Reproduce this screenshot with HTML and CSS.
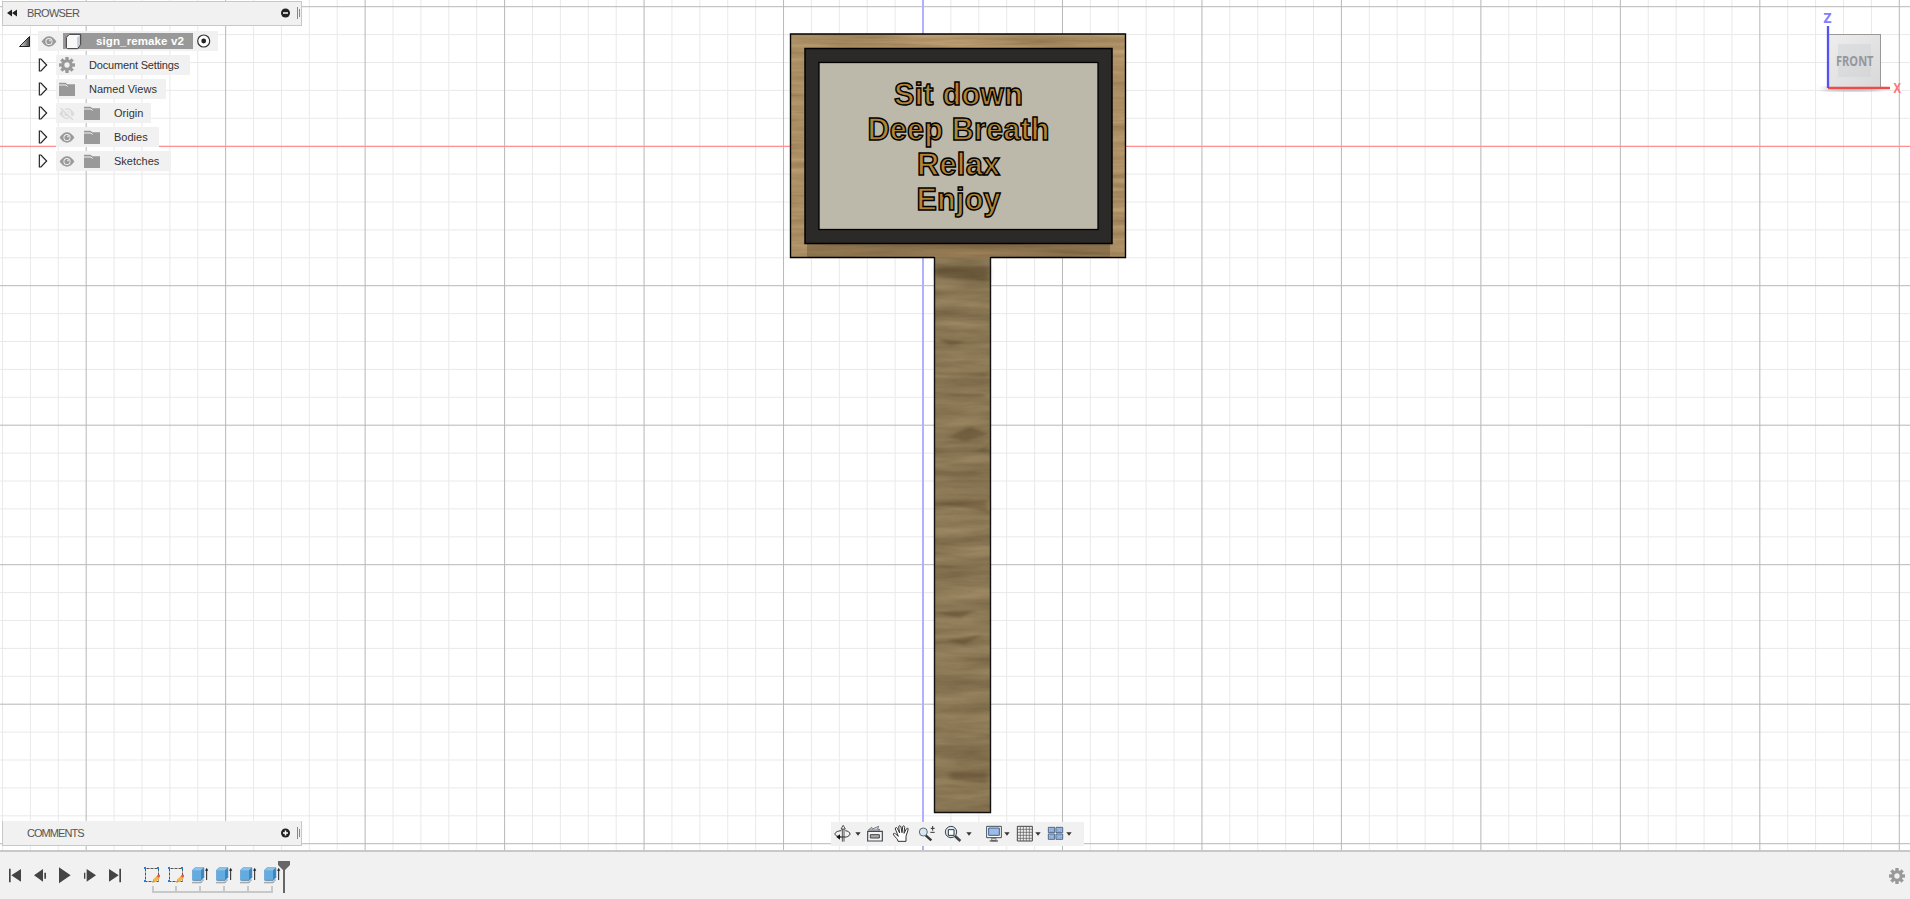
FILE: index.html
```html
<!DOCTYPE html>
<html lang="en">
<head>
<meta charset="utf-8">
<title>sign_remake v2</title>
<link rel="stylesheet" href="styles.css">
</head>
<body>
<svg class="defs" width="0" height="0">
  <defs>
    <symbol id="eye" viewBox="0 0 48 34"><path d="M1 17Q24-15 47 17Q24 49 1 17Z" fill="#999"/><circle cx="24" cy="17" r="11" fill="#f1f1f1"/><circle cx="24" cy="17" r="8" fill="#999"/><circle cx="27" cy="14" r="3" fill="#ddd"/></symbol>
    <symbol id="folder" viewBox="0 0 48 42"><path d="M0 2H20L25 7H48V42H0Z" fill="#999"/><path d="M0 9H21L26 14" fill="none" stroke="#f1f1f1" stroke-width="3"/></symbol>
    <symbol id="arrow" viewBox="0 0 30 42"><path d="M4 3H9L26 21L9 39H4Z" fill="#f8f8f8" stroke="#222" stroke-width="3.500"/></symbol>
    <symbol id="gear" viewBox="0 0 48 48"><g fill="#999"><path id="tooth" d="M19 0H29V48H19Z"/><use href="#tooth" transform="rotate(45 24 24)"/><use href="#tooth" transform="rotate(90 24 24)"/><use href="#tooth" transform="rotate(135 24 24)"/><circle cx="24" cy="24" r="17.500"/></g><circle cx="24" cy="24" r="8" fill="#f1f1f1"/></symbol>
    <symbol id="drop" viewBox="0 0 18 12"><path d="M1 1H17L9 11Z" fill="#333"/></symbol>
    <symbol id="sketch" viewBox="0 0 54 54"><path d="M4.500 4.500H43.500V43.500H4.500Z" fill="none" stroke="#555" stroke-width="3" stroke-dasharray="9 3" stroke-dashoffset="-3"/><g fill="#1685e4"><path d="M0 0h6v6h-6zM39 0h6v6h-6zM0 39h6v6h-6z"/></g><path d="M25 47L28 37L39 26L47 33L36 44Z" fill="#f2b64b"/><path d="M38 27L42 23H48V29L44 33Z" fill="#ff5050"/><path d="M25 47L28 39L33 44Z" fill="#b59c7a"/></symbol>
    <symbol id="extrude" viewBox="2 0 54 54"><path d="M2 44L12 36H38V39L29 49H2Z" fill="#999"/><path d="M2 41V44H28L38 35" fill="none" stroke="#eee" stroke-width="3"/><path d="M3 10L11 2H38V31L29 40H3Z" fill="#64abe0"/><path d="M3 10L11 2H38L29 10Z" fill="#8ec7ec"/><path d="M29 10L38 2V31L29 40Z" fill="#3d86bf"/><path d="M3 10L11 2H38V31L29 40H3Z" fill="none" stroke="#4a93cc" stroke-width="1.500"/><path d="M46 39V5" stroke="#222" stroke-width="3"/><path d="M41 11L46 3L51 11Z" fill="#222"/></symbol>
  </defs>
</svg>
<main class="app">
  <section class="viewport">
    <svg class="scene" width="1910" height="850" viewBox="0 0 1910 850">
      <defs>
        <pattern id="minor" x="922.500" y="145.700" width="27.894" height="27.900" patternUnits="userSpaceOnUse"><path d="M0 .5H28M.5 0V28" stroke="#000" stroke-opacity=".085"/></pattern>
        <pattern id="major" x="922.500" y="145.700" width="139.470" height="139.500" patternUnits="userSpaceOnUse"><path d="M0 .5H140M.5 0V140" stroke="#000" stroke-opacity=".21"/></pattern>
        <filter id="grain" x="0" y="0" width="100%" height="100%" color-interpolation-filters="sRGB">
          <feTurbulence type="fractalNoise" baseFrequency=".01 .16" numOctaves="5" seed="12" result="noise"/>
          <feColorMatrix in="noise" values=".22 0 0 0 .56  .21 0 0 0 .45  .18 0 0 0 .30  0 0 0 0 1"/>
        </filter>
        <filter id="grain-post" x="0" y="0" width="100%" height="100%" color-interpolation-filters="sRGB">
          <feTurbulence type="fractalNoise" baseFrequency=".012 .09" numOctaves="5" seed="5" result="noise"/>
          <feColorMatrix in="noise" values=".22 0 0 0 .43  .2 0 0 0 .365  .17 0 0 0 .245  0 0 0 0 1"/>
        </filter>
        <linearGradient id="shade" x1="0" x2="0" y1="0" y2="1"><stop offset="0" stop-color="#32230d" stop-opacity=".3"/><stop offset="1" stop-color="#32230d" stop-opacity=".22"/></linearGradient>
        <linearGradient id="cube" x1="0" y1="0" x2="1" y2="1"><stop offset="0" stop-color="#eee"/><stop offset="1" stop-color="#d8d8d8"/></linearGradient>
        <filter id="soft"><feGaussianBlur stdDeviation="3"/></filter>
        <filter id="smudge"><feGaussianBlur stdDeviation="2.500 1.200"/></filter>
      </defs>
      <rect width="1910" height="850" fill="#fff"/>
      <rect width="1910" height="850" fill="url(#minor)"/>
      <rect width="1910" height="850" fill="url(#major)"/>
      <path d="M0 146.500H1910" stroke="#ff9090"/>
      <path d="M923 0V850" stroke="#b0b0ff" stroke-width="2"/>

      <rect x="934" y="255" width="57" height="558" filter="url(#grain-post)"/>
      <g fill="#45321b" filter="url(#smudge)" opacity=".3">
        <path d="M936 266H989V282L936 277ZM938 338L965 342L950 346ZM936 373H988V376L936 374ZM936 394H985V397L936 395ZM948 437L970 427L988 434L965 441ZM974 451L988 446V453ZM936 504L988 500V512L965 508ZM937 613L976 610L960 618ZM948 641L984 634L964 645ZM950 772H988V784L950 780Z"/>
      </g>
      <path d="M934.500 257V812.500H990.500V257" fill="none" stroke="#111" stroke-width="1.400"/>
      <rect x="791" y="34" width="335" height="223" filter="url(#grain)"/>
      <rect x="807" y="243" width="303" height="14" fill="url(#shade)"/>
      <path d="M934.500 257.500H790.500V34H1125.500V257.500H990.500" fill="none" stroke="#000" stroke-width="1.400"/>
      <rect x="805" y="48.500" width="307" height="195" fill="#2b2a28" stroke="#000" stroke-width="1.500"/>
      <rect x="819" y="62.500" width="279" height="167" fill="#bdb9aa" stroke="#000" stroke-width="1.300"/>
      <g class="sign-text">
        <text x="894" y="105.300" textLength="129">Sit down</text>
        <text x="867.500" y="140" textLength="182">Deep Breath</text>
        <text x="917" y="174.800" textLength="83">Relax</text>
        <text x="916.500" y="209.700" textLength="84">Enjoy</text>
      </g>

      <ellipse cx="1852" cy="89" rx="30" ry="2.500" fill="#777" opacity=".6" filter="url(#soft)"/>
      <rect x="1828.500" y="34.500" width="52" height="53" fill="url(#cube)" stroke="#999"/>
      <rect x="1838" y="44" width="33" height="33" fill="#cdd0d3" opacity=".45"/>
      <text class="cube-label" x="1836" y="66" textLength="37.500" lengthAdjust="spacingAndGlyphs">FRONT</text>
      <path d="M1828 88H1890" stroke="#f04a4a" stroke-width="2.300"/>
      <path d="M1828 26V88" stroke="#5552f0" stroke-width="2.300"/>
      <text class="axis" x="1823.500" y="23" fill="#8080ff" textLength="8" lengthAdjust="spacingAndGlyphs">Z</text>
      <text class="axis" x="1893.500" y="93" fill="#ff7676" textLength="7.500" lengthAdjust="spacingAndGlyphs">X</text>
    </svg>

    <aside class="browser">
      <header class="panel">
        <svg width="12" height="8" viewBox="0 0 12 8"><path d="M5 .5V7.500L0 4ZM10 .5V7.500L5 4Z" fill="#222"/></svg>
        <span class="panel-title">BROWSER</span>
        <svg width="20" height="12" viewBox="0 0 20 12"><circle cx="4.500" cy="6" r="4.500" fill="#222"/><path d="M2 6H7" stroke="#fff" stroke-width="1.500"/><path d="M16.500 0V12M18.500 2V10" stroke="#888"/></svg>
      </header>
      <div class="tree">
        <div class="row root">
          <svg class="tri" width="13" height="13" viewBox="0 0 13 13"><defs><linearGradient id="tg"><stop stop-color="#eee"/><stop offset="1" stop-color="#444"/></linearGradient></defs><path d="M1.500 11.500H11.500V1.500Z" fill="url(#tg)" stroke="#222"/></svg>
          <div class="item">
            <svg width="16" height="11"><use href="#eye"/></svg>
            <div class="selected"><svg width="17" height="17" viewBox="0 0 51 51"><path d="M4 13L13 4H47V34L38 47H8L4 43Z" fill="#f8f8f8" stroke="#333" stroke-width="3"/><path d="M36 14L45 6V34L37 45Z" fill="#c8ccd5"/></svg><b>sign_remake v2</b></div>
            <svg width="14" height="14" viewBox="0 0 14 14"><circle cx="6.700" cy="7" r="6" fill="#fff" stroke="#333" stroke-width="1.200"/><circle cx="6.700" cy="7" r="2.400" fill="#222"/></svg>
          </div>
        </div>
        <div class="row"><svg class="arrow" width="10" height="14"><use href="#arrow"/></svg><div class="item w-settings"><svg width="16" height="16"><use href="#gear"/></svg><span class="name">Document Settings</span></div></div>
        <div class="row"><svg class="arrow" width="10" height="14"><use href="#arrow"/></svg><div class="item w-views"><svg width="16" height="14"><use href="#folder"/></svg><span class="name views">Named Views</span></div></div>
        <div class="row"><svg class="arrow" width="10" height="14"><use href="#arrow"/></svg><div class="item w-origin"><svg class="hidden-eye" width="16" height="13" viewBox="0 0 48 39"><path d="M1 20Q24-12 47 20Q24 52 1 20Z" fill="#999"/><circle cx="24" cy="20" r="12" fill="#f1f1f1"/><circle cx="24" cy="20" r="8" fill="#999"/><path d="M7 1L44 38" stroke="#f1f1f1" stroke-width="8"/><path d="M5 3L42 39" stroke="#999" stroke-width="4"/></svg><svg class="second" width="16" height="14"><use href="#folder"/></svg><span class="name">Origin</span></div></div>
        <div class="row"><svg class="arrow" width="10" height="14"><use href="#arrow"/></svg><div class="item w-bodies"><svg width="16" height="11"><use href="#eye"/></svg><svg class="second" width="16" height="14"><use href="#folder"/></svg><span class="name">Bodies</span></div></div>
        <div class="row"><svg class="arrow" width="10" height="14"><use href="#arrow"/></svg><div class="item w-sketches"><svg width="16" height="11"><use href="#eye"/></svg><svg class="second" width="16" height="14"><use href="#folder"/></svg><span class="name">Sketches</span></div></div>
      </div>
    </aside>

    <div class="panel comments">
      <span class="panel-title">COMMENTS</span>
      <svg width="20" height="12" viewBox="0 0 20 12"><circle cx="4.500" cy="6" r="4.500" fill="#222"/><path d="M2 6H7M4.500 3.500V8.500" stroke="#fff" stroke-width="1.500"/><path d="M16.500 0V12M18.500 2V10" stroke="#888"/></svg>
    </div>

    <nav class="navbar">
      <svg class="orbit" width="18" height="18" viewBox="40 46 54 54"><g fill="none" stroke="#333"><path d="M62 63C50 64 43 68 43 73S52 81 62 82" stroke-width="3"/><path d="M74 63C82 64 88 68 88 73C88 77 83 80 77 82H54" stroke-width="3"/><path d="M65 96V55M70 96V55" stroke-width="2.500"/></g><path d="M61 58L67.500 47L74 58Z" fill="#fff" stroke="#333" stroke-width="2.500"/><path d="M47 82L58 74V90Z" fill="#111"/></svg>
      <svg class="d1" width="6" height="4"><use href="#drop"/></svg>
      <svg class="look" width="18" height="18" viewBox="138 46 54 54"><path d="M143 65H187V94H143Z" fill="#f5f5f5" stroke="#444a55" stroke-width="3.500"/><path d="M151 75H178V85H151Z" fill="#aaa" stroke="#444" stroke-width="3"/><path d="M145 61L155 53L157 58L176 50L173 58L180 61Z" fill="#ddd" stroke="#444a55" stroke-width="2"/></svg>
      <svg class="hand" width="18" height="18" viewBox="217 46 54 54"><path d="M235 95C235 89 229 85 222 76C219 71 224 69 228 73L236 80L227 58C226 53 231 52 233 56L240 70L237 52C237 47 243 47 244 52L247 69L249 51C250 47 255 48 255 53L253 71L260 58C263 53 267 56 265 61L259 80V95Z" fill="#fff" stroke="#333" stroke-width="3"/></svg>
      <svg class="zoomer" width="18" height="18" viewBox="294 46 54 54"><path d="M317 77L334 92" stroke="#333" stroke-width="7"/><circle cx="310" cy="67" r="12" fill="#d3eaf0" stroke="#667" stroke-width="3"/><path d="M332 56H344M338 49V63M331 68H344" stroke="#333" stroke-width="3"/></svg>
      <svg class="window" width="18" height="18" viewBox="372 46 54 54"><path d="M405 79L421 94" stroke="#444" stroke-width="8"/><circle cx="393" cy="67" r="17" fill="#d3eaf0" stroke="#445" stroke-width="3"/><path d="M385 60H402V77H385Z" fill="#fff" stroke="#333" stroke-width="3"/></svg>
      <svg class="d2" width="6" height="4"><use href="#drop"/></svg>
      <svg class="display" width="18" height="18" viewBox="495 46 54 54"><path d="M500 50H544V84H500Z" fill="#fff" stroke="#444a55" stroke-width="3"/><path d="M506 55H538V77H506Z" fill="#9bbde6" stroke="#425d8c" stroke-width="3"/><path d="M515 86H528V93H515Z" fill="#ddd" stroke="#555" stroke-width="2"/><path d="M509 94H534" stroke="#333" stroke-width="3"/></svg>
      <svg class="d3" width="6" height="4"><use href="#drop"/></svg>
      <svg class="grid" width="18" height="18" viewBox="588 46 54 54"><path d="M592 50H637V94H592Z" fill="#eee" stroke="#444" stroke-width="3"/><path d="M601 51V94M610 51V94M619 51V94M628 51V94M593 59H636M593 68H636M593 77H636M593 86H636" stroke="#555" stroke-width="2"/></svg>
      <svg class="d4" width="6" height="4"><use href="#drop"/></svg>
      <svg class="views4" width="18" height="18" viewBox="681 46 54 54"><g fill="#a9c8ec" stroke="#3d506d" stroke-width="2.500"><path d="M685 53H704V69H685ZM708 53H728V69H708ZM685 73H704V89H685ZM708 73H728V89H708Z"/></g><g fill="none" stroke="#6b91c3" stroke-width="2"><path d="M690 58H700V65H690ZM713 58H723V65H713ZM690 78H700V85H690ZM713 78H723V85H713Z"/></g></svg>
      <svg class="d5" width="6" height="4"><use href="#drop"/></svg>
    </nav>
  </section>

  <footer class="timeline">
    <div class="playback">
      <svg width="13" height="15" viewBox="0 0 39 45"><path d="M0 2H5V43H0ZM36 3V41L7 22Z" fill="#444"/></svg>
      <svg width="13" height="15" viewBox="3 0 39 45"><path d="M30 3V41L3 22ZM34 14H39V32H34Z" fill="#444"/></svg>
      <svg width="13" height="17" viewBox="3 0 39 51"><path d="M3 1V49L38 25Z" fill="#444"/></svg>
      <svg width="13" height="15" viewBox="3 0 39 45"><path d="M11 3V41L39 22ZM3 14H7V32H3Z" fill="#444"/></svg>
      <svg width="13" height="15" viewBox="2 0 39 45"><path d="M33 2H38V43H33ZM2 3V41L31 22Z" fill="#444"/></svg>
    </div>
    <div class="history">
      <div class="features">
        <svg width="18" height="18"><use href="#sketch"/></svg>
        <svg width="18" height="18"><use href="#sketch"/></svg>
        <svg width="18" height="18"><use href="#extrude"/></svg>
        <svg width="18" height="18"><use href="#extrude"/></svg>
        <svg width="18" height="18"><use href="#extrude"/></svg>
        <svg width="18" height="18"><use href="#extrude"/></svg>
      </div>
      <svg class="track" width="122" height="8" viewBox="0 0 122 8"><path d="M1 0V6H120V0M24 0V6M48 0V6M72 0V6M96 0V6" fill="none" stroke="#c8c8c8" stroke-width="2"/></svg>
      <svg class="marker" width="12" height="32" viewBox="0 0 12 32"><path d="M0 0H12V4L7 9V32H5V9L0 4Z" fill="#666"/></svg>
    </div>
    <svg class="settings" width="16" height="16"><use href="#gear"/></svg>
  </footer>
</main>
</body>
</html>
```
FILE: styles.css
```css
* { box-sizing: border-box; }
body { margin: 0; font: 11px "Liberation Sans", Arial, sans-serif; color: #333; overflow: hidden; }
svg { display: block; flex: none; }
.defs { position: absolute; }
.app { display: flex; flex-direction: column; height: 899px; }
.viewport { position: relative; height: 850px; flex: none; overflow: hidden; }

.sign-text { font-size: 30.500px; font-weight: bold; fill: #b28538; stroke: #000; stroke-width: 1.400px; }
.cube-label { font: bold 14px "Open Sans", sans-serif; fill: #94979c; }
.axis { font: bold 14px "Open Sans", sans-serif; }

.browser { position: absolute; left: 2px; top: 1px; }
.panel { display: flex; align-items: center; width: 300px; height: 25px; padding: 0 0 1px 4px; background: #f1f1f1; border: 1px solid #c8c8c8; }
.panel-title { flex: 1; margin-left: 8px; font-size: 11px; letter-spacing: -.65px; color: #555; }
.comments { position: absolute; left: 2px; top: 821px; border-top: 0; padding-left: 16px; }
.comments .panel-title { letter-spacing: -.95px; }
.tree { display: flex; flex-direction: column; gap: 4px; padding-top: 5px; }
.row { display: flex; align-items: center; height: 20px; padding-left: 36px; }
.arrow { margin-right: 8px; }
.item { display: flex; align-items: center; height: 20px; padding-left: 3px; background: #f1f1f1; white-space: nowrap; }
.name { margin-left: 14px; }
.views { letter-spacing: .03px; }
.second { margin-left: 9px; }
.hidden-eye { opacity: .25; }
.w-settings { width: 134px; letter-spacing: -.17px; }
.w-views { width: 110px; }
.w-origin { width: 95px; }
.w-bodies { width: 103px; }
.w-sketches { width: 115px; }
.root { padding-left: 16px; }
.tri { margin-right: 7px; }
.root .item { width: 180px; }
.selected { display: flex; align-items: center; width: 130px; height: 16px; margin: 0 4px 0 6px; padding-left: 2px; background: #999; color: #fff; }
.selected b { margin-left: 14px; font-size: 11.500px; letter-spacing: .12px; }

.navbar { position: absolute; left: 831px; top: 822px; width: 253px; height: 24px; display: flex; align-items: center; background: #f1f1f1; }
.orbit { margin-left: 3px; }
.d1 { margin-left: 3px; }
.look { margin-left: 5px; }
.hand { margin-left: 8px; }
.zoomer { margin-left: 8px; }
.window { margin-left: 8px; }
.d2 { margin-left: 4px; }
.display { margin-left: 13px; }
.d3 { margin-left: 1px; }
.grid { margin-left: 6px; }
.d4 { margin-left: 1px; }
.views4 { margin-left: 6px; }
.d5 { margin-left: 1px; }

.timeline { display: flex; align-items: flex-start; height: 49px; border-top: 2px solid #c8c8c8; background: #f1f1f1; }
.playback { display: flex; align-items: center; gap: 12px; height: 17px; margin: 15px 0 0 9px; }
.history { position: relative; margin: 15px 0 0 22px; }
.features { display: flex; gap: 6px; }
.track { margin: 1px 0 0 8px; }
.marker { position: absolute; left: 134px; top: -6px; }
.settings { margin: 16px 5px 0 auto; }
```
